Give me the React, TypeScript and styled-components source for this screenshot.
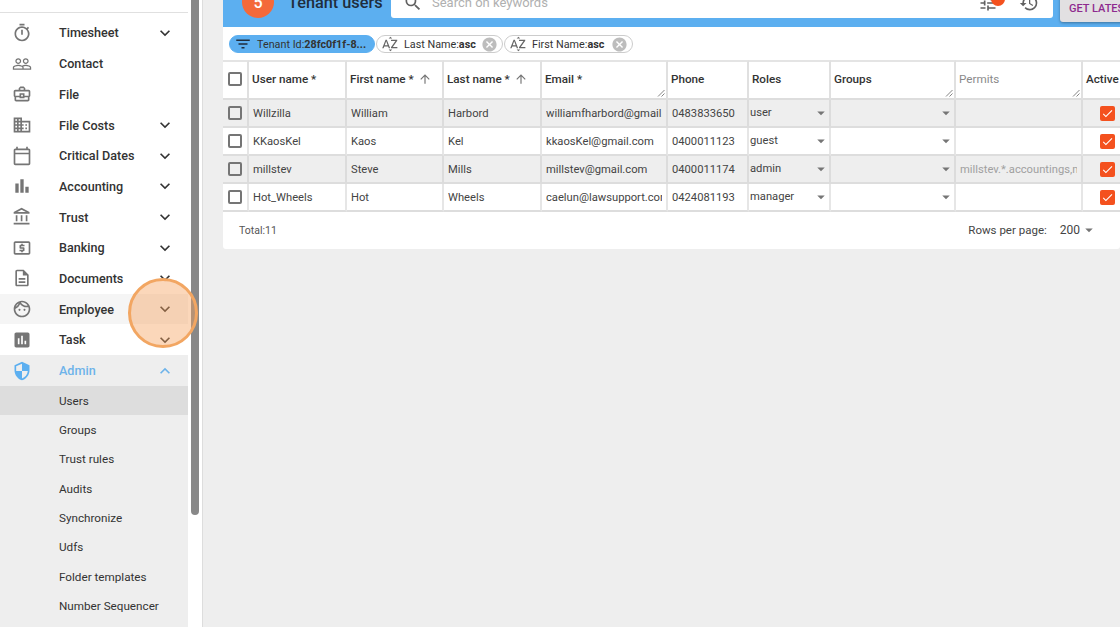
import React from "react";
import styled, { createGlobalStyle } from "styled-components";
import {
  MdArrowDropDown,
  MdArrowUpward,
  MdAssessment,
  MdBarChart,
  MdCancel,
  MdCheck,
  MdDomain,
  MdExpandLess,
  MdExpandMore,
  MdFilterList,
  MdHistory,
  MdOutlineAccountBalance,
  MdOutlineBusinessCenter,
  MdOutlineCalendarToday,
  MdOutlineDescription,
  MdOutlineFace,
  MdOutlineLocalAtm,
  MdOutlineTimer,
  MdPeopleOutline,
  MdSearch,
  MdSecurity,
  MdSortByAlpha,
  MdTune,
} from "react-icons/md";

const GlobalStyle = createGlobalStyle`
  html, body {
    margin: 0;
    padding: 0;
    height: 100%;
    overflow: hidden;
    font-family: Roboto, "Liberation Sans", sans-serif;
    background: #eeeeee;
  }
  * { box-sizing: border-box; }
`;

const Page = styled.div`
  position: relative;
  display: flex;
  width: 1120px;
  height: 627px;
  overflow: hidden;
`;

const Sidebar = styled.nav`
  width: 188px;
  flex-shrink: 0;
  background: #ffffff;
  overflow: hidden;
`;

const SidebarTop = styled.div`
  height: 17.6px;
  &::after {
    content: "";
    display: block;
    height: 12px;
    border-bottom: 1px solid #e0e0e0;
  }
`;

const NavRow = styled.div<{ $bg?: string; $color?: string }>`
  display: flex;
  align-items: center;
  height: 30.7px;
  padding: 0 13px 0 12px;
  background: ${(p) => p.$bg ?? "transparent"};
  color: ${(p) => p.$color ?? "#333333"};
`;

const NavIcon = styled.span<{ $color?: string }>`
  display: flex;
  width: 20px;
  font-size: 20px;
  color: ${(p) => p.$color ?? "#757575"};
`;

const NavLabel = styled.span`
  flex: 1;
  margin-left: 27px;
  font-size: 12.6px;
  font-weight: 500;
  color: inherit;
`;

const NavChevron = styled.span<{ $color?: string }>`
  display: flex;
  font-size: 20px;
  color: ${(p) => p.$color ?? "#333333"};
`;

const SubGroup = styled.div`
  background: #eeeeee;
  height: 300px;
`;

const SubRow = styled.div<{ $active?: boolean }>`
  display: flex;
  align-items: center;
  height: ${(p) => (p.$active ? 29.6 : 29.3)}px;
  padding-left: 59px;
  font-size: 11.7px;
  color: #333333;
  background: ${(p) => (p.$active ? "#dddddd" : "transparent")};
`;

const ScrollTrack = styled.div`
  width: 15px;
  flex-shrink: 0;
  padding-left: 3px;
  background: #ffffff;
  border-right: 1px solid #dddddd;
`;

const ScrollThumb = styled.div`
  width: 8px;
  height: 525px;
  margin-top: -10px;
  background: #888888;
  border-radius: 0 0 4px 4px;
`;

const Main = styled.main`
  flex: 1;
  min-width: 0;
  padding-left: 20px;
  background: #eeeeee;
`;

const Header = styled.header`
  display: flex;
  align-items: flex-end;
  height: 27px;
  background: #5caff0;
  overflow: hidden;
`;

const Avatar = styled.div`
  display: flex;
  align-items: center;
  justify-content: center;
  flex-shrink: 0;
  width: 32px;
  height: 32px;
  margin: 0 14px 9px 19px;
  border-radius: 50%;
  background: #f4693a;
  color: #ffffff;
  font-size: 16px;
  font-weight: 500;
`;

const Title = styled.h1`
  width: 103px;
  margin: 0 0 14px;
  flex-shrink: 0;
  font-size: 16.3px;
  line-height: 20px;
  font-weight: 500;
  color: #1f2d3d;
  white-space: nowrap;
`;

const SearchBox = styled.div`
  display: flex;
  align-items: center;
  flex-shrink: 0;
  width: 662px;
  height: 40px;
  margin-bottom: 9px;
  padding: 9px 12px 0 12px;
  background: #ffffff;
  border-radius: 0 0 3px 3px;
  color: #616161;
`;

const SearchText = styled.span`
  flex: 1;
  margin-left: 9px;
  font-size: 13px;
  color: #b0b0b0;
`;

const BadgeIcon = styled.span`
  position: relative;
  display: flex;
  margin-right: 21px;
  font-size: 20px;
  color: #616161;
  &::after {
    content: "";
    position: absolute;
    top: -1px;
    right: -7px;
    width: 14px;
    height: 14px;
    border-radius: 50%;
    background: #f4511e;
  }
`;

const PlainIcon = styled.span`
  display: flex;
  margin-right: 2px;
  font-size: 20px;
  color: #616161;
`;

const LatestButton = styled.button`
  flex-shrink: 0;
  width: 80px;
  height: 40px;
  margin: 0 0 5px 7px;
  padding: 12px 0 0 9px;
  border: none;
  border-radius: 3px;
  background: #e2e0e2;
  box-shadow: 0 1px 3px rgba(0, 0, 0, 0.35);
  color: #8e2a8e;
  font-family: inherit;
  font-size: 11px;
  font-weight: 500;
  text-align: left;
  white-space: nowrap;
`;

const Panel = styled.section`
  background: #ffffff;
  border-radius: 0 0 3px 3px;
  overflow: hidden;
`;

const ChipRow = styled.div`
  display: flex;
  gap: 1px;
  height: 33px;
  padding: 8px 0 0 6px;
`;

const Chip = styled.div<{ $w: number; $filled?: boolean }>`
  display: flex;
  align-items: center;
  width: ${(p) => p.$w}px;
  height: 18px;
  padding: 0 4px 0 5px;
  border-radius: 9px;
  border: 1px solid ${(p) => (p.$filled ? "#5caff0" : "#cccccc")};
  background: ${(p) => (p.$filled ? "#5caff0" : "#ffffff")};
  color: #333333;
  font-size: 10.8px;
  white-space: nowrap;
`;

const ChipIcon = styled.span<{ $filled?: boolean }>`
  display: flex;
  font-size: 18px;
  margin-left: -1px;
  color: ${(p) => (p.$filled ? "#1f2d3d" : "#666666")};
`;

const ChipText = styled.span`
  flex: 1;
  margin-left: 5px;
  b { font-weight: 700; }
`;

const ChipClose = styled.span`
  display: flex;
  font-size: 17px;
  color: #bdbdbd;
`;

const Table = styled.table`
  width: 959px;
  table-layout: fixed;
  border-collapse: separate;
  border-spacing: 0;
`;

const HeadCell = styled.th<{ $muted?: boolean }>`
  position: relative;
  height: 40px;
  padding: 0 3px 2px;
  border-top: 2px solid #e4e4e4;
  border-right: 2px solid #e0e0e0;
  border-bottom: 2px solid #dddddd;
  color: ${(p) => (p.$muted ? "#8a8a8a" : "#333333")};
  font-size: 11.7px;
  font-weight: ${(p) => (p.$muted ? 400 : 500)};
  text-align: left;
  white-space: nowrap;
  overflow: hidden;
`;

const SortArrow = styled(MdArrowUpward)`
  margin-left: 4px;
  font-size: 14px;
  color: #757575;
  vertical-align: -3px;
`;

const ResizeGrip = styled.svg`
  position: absolute;
  right: 1px;
  bottom: 1px;
  width: 8px;
  height: 8px;
`;

const Row = styled.tr<{ $shade?: boolean }>`
  background: ${(p) => (p.$shade ? "#eeeeee" : "#ffffff")};
`;

const Cell = styled.td<{ $muted?: boolean; $tight?: boolean; $shade?: boolean }>`
  height: 28px;
  padding: 0 ${(p) => (p.$tight ? "0 0 1px" : "4px")};
  border-right: 2px solid ${(p) => (p.$shade ? "#dcdcdc" : "#e6e6e6")};
  border-bottom: 2px solid #dddddd;
  color: ${(p) => (p.$muted ? "#a0a0a0" : "#444444")};
  font-size: 11.2px;
  white-space: nowrap;
  overflow: hidden;
`;

const SelectInner = styled.div`
  display: flex;
  align-items: center;
  justify-content: space-between;
  font-size: 11.2px;
`;

const RoleText = styled.span`
  margin-top: -2px;
`;

const SelectArrow = styled.span`
  display: flex;
  margin-right: -1px;
  font-size: 18px;
  color: #757575;
`;

const BoxWrap = styled.div`
  display: flex;
  justify-content: center;
`;

const EmptyBox = styled.span`
  display: block;
  width: 14px;
  height: 14px;
  border: 2px solid #757575;
  border-radius: 2px;
  background: transparent;
`;

const CheckedBox = styled.span`
  display: flex;
  align-items: center;
  justify-content: center;
  width: 15px;
  height: 15px;
  margin-left: 16px;
  border-radius: 2px;
  background: #f4511e;
  color: #ffffff;
  font-size: 13px;
`;

const Footer = styled.footer`
  display: flex;
  align-items: center;
  height: 37px;
  padding: 0 22px 0 16px;
`;

const TotalText = styled.span`
  flex: 1;
  font-size: 10.5px;
  color: #555555;
`;

const PerPageLabel = styled.span`
  margin-bottom: 2px;
  font-size: 11.5px;
  color: #444444;
`;

const PerPageValue = styled.span`
  display: flex;
  align-items: center;
  margin: 0 0 2px 13px;
  font-size: 12px;
  color: #444444;
`;

const Spotlight = styled.div`
  position: absolute;
  left: 128px;
  top: 278px;
  width: 70px;
  height: 70px;
  border-radius: 50%;
  border: 3px solid #f2a662;
  background: rgba(245, 160, 90, 0.42);
  pointer-events: none;
`;

const navItems: { label: string; icon: React.ReactNode; chevron?: boolean; bg?: string }[] = [
  { label: "Timesheet", icon: <MdOutlineTimer />, chevron: true },
  { label: "Contact", icon: <MdPeopleOutline /> },
  { label: "File", icon: <MdOutlineBusinessCenter /> },
  { label: "File Costs", icon: <MdDomain />, chevron: true },
  { label: "Critical Dates", icon: <MdOutlineCalendarToday />, chevron: true },
  { label: "Accounting", icon: <MdBarChart />, chevron: true },
  { label: "Trust", icon: <MdOutlineAccountBalance />, chevron: true },
  { label: "Banking", icon: <MdOutlineLocalAtm />, chevron: true },
  { label: "Documents", icon: <MdOutlineDescription />, chevron: true },
  { label: "Employee", icon: <MdOutlineFace />, chevron: true, bg: "#f5f5f5" },
  { label: "Task", icon: <MdAssessment />, chevron: true },
];

const subItems = ["Groups", "Trust rules", "Audits", "Synchronize", "Udfs", "Folder templates", "Number Sequencer"];

const columns = [26, 98, 97, 98, 126, 81, 82, 125, 127, 99];

const users = [
  { user: "Willzilla", first: "William", last: "Harbord", email: "williamfharbord@gmail.com", phone: "0483833650", role: "user", permits: "" },
  { user: "KKaosKel", first: "Kaos", last: "Kel", email: "kkaosKel@gmail.com", phone: "0400011123", role: "guest", permits: "" },
  { user: "millstev", first: "Steve", last: "Mills", email: "millstev@gmail.com", phone: "0400011174", role: "admin", permits: "millstev.*.accountings,millstev" },
  { user: "Hot_Wheels", first: "Hot", last: "Wheels", email: "caelun@lawsupport.com.au", phone: "0424081193", role: "manager", permits: "" },
];

const Grip = () => (
  <ResizeGrip viewBox="0 0 8 8">
    <path d="M1 7.5 L7.5 1 M4.5 7.5 L7.5 4.5" stroke="#666666" strokeWidth="0.8" fill="none" />
  </ResizeGrip>
);

const CellClip = styled.div`
  overflow: hidden;
`;

export default function App() {
  return (
    <Page>
      <GlobalStyle />
      <Sidebar>
        <SidebarTop />
        {navItems.map((item) => (
          <NavRow key={item.label} $bg={item.bg}>
            <NavIcon>{item.icon}</NavIcon>
            <NavLabel>{item.label}</NavLabel>
            {item.chevron && (
              <NavChevron>
                <MdExpandMore />
              </NavChevron>
            )}
          </NavRow>
        ))}
        <NavRow $bg="#eeeeee" $color="#6db3ea">
          <NavIcon $color="#5caff0">
            <MdSecurity />
          </NavIcon>
          <NavLabel>Admin</NavLabel>
          <NavChevron $color="#6db3ea">
            <MdExpandLess />
          </NavChevron>
        </NavRow>
        <SubGroup>
          <SubRow $active>Users</SubRow>
          {subItems.map((label) => (
            <SubRow key={label}>{label}</SubRow>
          ))}
        </SubGroup>
      </Sidebar>
      <ScrollTrack>
        <ScrollThumb />
      </ScrollTrack>
      <Main>
        <Header>
          <Avatar>5</Avatar>
          <Title>Tenant users</Title>
          <SearchBox>
            <MdSearch size={20} />
            <SearchText>Search on keywords</SearchText>
            <BadgeIcon>
              <MdTune />
            </BadgeIcon>
            <PlainIcon>
              <MdHistory />
            </PlainIcon>
          </SearchBox>
          <LatestButton>GET LATEST</LatestButton>
        </Header>
        <Panel>
          <ChipRow>
            <Chip $w={146} $filled>
              <ChipIcon $filled>
                <MdFilterList />
              </ChipIcon>
              <ChipText>
                Tenant Id:<b>28fc0f1f-8...</b>
              </ChipText>
            </Chip>
            <Chip $w={127}>
              <ChipIcon>
                <MdSortByAlpha />
              </ChipIcon>
              <ChipText>
                Last Name:<b>asc</b>
              </ChipText>
              <ChipClose>
                <MdCancel />
              </ChipClose>
            </Chip>
            <Chip $w={129}>
              <ChipIcon>
                <MdSortByAlpha />
              </ChipIcon>
              <ChipText>
                First Name:<b>asc</b>
              </ChipText>
              <ChipClose>
                <MdCancel />
              </ChipClose>
            </Chip>
          </ChipRow>
          <Table>
            <colgroup>
              {columns.map((w, i) => (
                <col key={i} style={{ width: w }} />
              ))}
            </colgroup>
            <thead>
              <tr>
                <HeadCell>
                  <BoxWrap>
                    <EmptyBox />
                  </BoxWrap>
                </HeadCell>
                <HeadCell>User name *</HeadCell>
                <HeadCell>
                  First name *<SortArrow />
                </HeadCell>
                <HeadCell>
                  Last name *<SortArrow />
                </HeadCell>
                <HeadCell>
                  Email *
                  <Grip />
                </HeadCell>
                <HeadCell>Phone</HeadCell>
                <HeadCell>Roles</HeadCell>
                <HeadCell>
                  Groups
                  <Grip />
                </HeadCell>
                <HeadCell $muted>
                  Permits
                  <Grip />
                </HeadCell>
                <HeadCell>Active</HeadCell>
              </tr>
            </thead>
            <tbody>
              {users.map((u, i) => {
                const shade = i % 2 === 0;
                return (
                  <Row key={u.user} $shade={shade}>
                    <Cell $shade={shade}>
                      <BoxWrap>
                        <EmptyBox />
                      </BoxWrap>
                    </Cell>
                    <Cell $shade={shade}>{u.user}</Cell>
                    <Cell $shade={shade}>{u.first}</Cell>
                    <Cell $shade={shade}>{u.last}</Cell>
                    <Cell $shade={shade}>
                      <CellClip>{u.email}</CellClip>
                    </Cell>
                    <Cell $shade={shade}>{u.phone}</Cell>
                    <Cell $shade={shade} $tight>
                      <SelectInner>
                        <RoleText>{u.role}</RoleText>
                        <SelectArrow>
                          <MdArrowDropDown />
                        </SelectArrow>
                      </SelectInner>
                    </Cell>
                    <Cell $shade={shade} $tight>
                      <SelectInner>
                        <span />
                        <SelectArrow>
                          <MdArrowDropDown />
                        </SelectArrow>
                      </SelectInner>
                    </Cell>
                    <Cell $shade={shade} $muted>
                      <CellClip>{u.permits}</CellClip>
                    </Cell>
                    <Cell $shade={shade} $tight>
                      <CheckedBox>
                        <MdCheck />
                      </CheckedBox>
                    </Cell>
                  </Row>
                );
              })}
            </tbody>
          </Table>
          <Footer>
            <TotalText>Total:11</TotalText>
            <PerPageLabel>Rows per page:</PerPageLabel>
            <PerPageValue>
              200
              <MdArrowDropDown size={18} color="#757575" />
            </PerPageValue>
          </Footer>
        </Panel>
      </Main>
      <Spotlight />
    </Page>
  );
}
